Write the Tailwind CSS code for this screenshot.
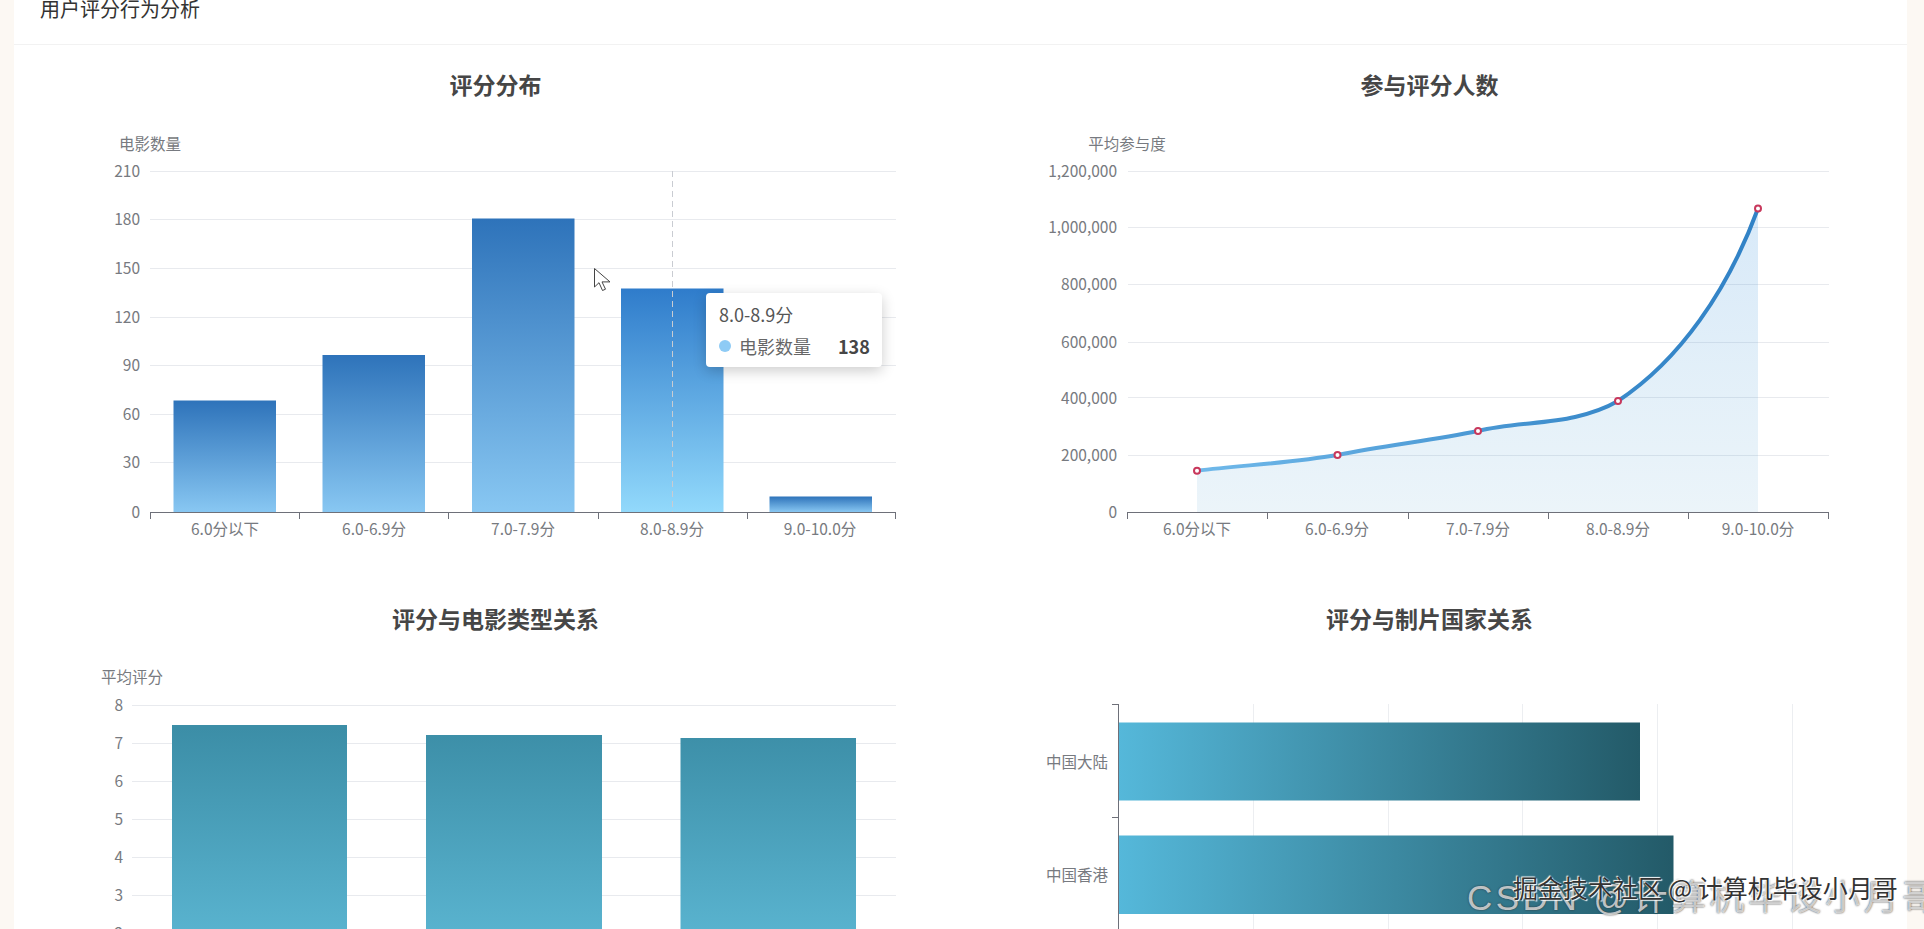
<!DOCTYPE html>
<html lang="zh-CN">
<head>
  <meta charset="UTF-8">
  <meta name="viewport" content="width=device-width, initial-scale=1.0">
  <title>用户评分行为分析</title>
  <script src="https://cdn.jsdelivr.net/npm/@tailwindcss/browser@4"></script>
</head>
<body class="font-['Noto_Sans_CJK_SC',sans-serif] text-[#464646]">
  <div class="relative h-[929px] overflow-hidden bg-[#fcf8f3] pl-[14px] pr-[17px]">
    <div class="-mt-5 bg-white">
      <div class="h-[65px] border-b border-[#f2f2f2] pl-[26px] pt-[15px] text-[20px] leading-7 text-[#333]">用户评分行为分析</div>

      <div class="grid grid-cols-[912px_912px] gap-x-6 gap-y-5 pl-6 pt-[23px]">

        <!-- 评分分布 -->
        <div class="relative">
          <h3 class="mb-[2px] pl-[3px] text-center text-[23px] font-bold leading-8">评分分布</h3>
          <svg class="block text-[15.5px]" width="912" height="480" viewBox="38 103 912 480">
            <defs>
              <linearGradient id="blue" x1="0" y1="0" x2="0" y2="1">
                <stop offset="0" stop-color="#2e73ba"/>
                <stop offset="1" stop-color="#88c7f2"/>
              </linearGradient>
              <linearGradient id="blueHover" x1="0" y1="0" x2="0" y2="1">
                <stop offset="0" stop-color="#2f7ccb"/>
                <stop offset="1" stop-color="#92d9fb"/>
              </linearGradient>
            </defs>
            <path d="M150 172.5H896M150 220.5H896M150 269.5H896M150 318.5H896M150 366.5H896M150 415.5H896M150 463.5H896" stroke="#e8eaee"/>
            <g fill="url(#blue)">
              <rect x="173.5" y="401.500" width="102.5" height="111.500"/>
              <rect x="322.5" y="356" width="102.5" height="157"/>
              <rect x="472" y="219.500" width="102.5" height="293.500"/>
              <rect x="621" y="289.500" width="102.5" height="223.500" fill="url(#blueHover)"/>
              <rect x="769.5" y="497.5" width="102.5" height="15.5"/>
            </g>
            <path d="M672.5 172V513" stroke="#c9ccd2" stroke-dasharray="6 4"/>
            <path d="M150 513.5H896M150.5 513V520M299.5 513V520M448.5 513V520M598.5 513V520M747.5 513V520M895.5 513V520" stroke="#6e7079" fill="none"/>
            <g fill="#777a80" text-anchor="end" dominant-baseline="central">
              <text x="140" y="171">210</text>
              <text x="140" y="219">180</text>
              <text x="140" y="268">150</text>
              <text x="140" y="316.5">120</text>
              <text x="140" y="365">90</text>
              <text x="140" y="414">60</text>
              <text x="140" y="462">30</text>
              <text x="140" y="511.5">0</text>
            </g>
            <g fill="#777a80" text-anchor="middle" dominant-baseline="central">
              <text x="150" y="143.5">电影数量</text>
              <text x="225" y="529">6.0分以下</text>
              <text x="374" y="529">6.0-6.9分</text>
              <text x="523" y="529">7.0-7.9分</text>
              <text x="672" y="529">8.0-8.9分</text>
              <text x="820" y="529">9.0-10.0分</text>
            </g>
          </svg>

          <!-- tooltip -->
          <div class="absolute left-[668px] top-[225px] h-[74px] w-[176px] rounded bg-white pl-[13px] pt-2 text-[18px] leading-[26px] text-[#555] shadow-[0_4px_14px_rgba(0,0,0,0.2)]">
            <div>8.0-8.9分</div>
            <div class="mt-[6px] flex items-center">
              <span class="h-3 w-3 rounded-full bg-[#8ecbf5]"></span>
              <span class="ml-2 text-[#666]">电影数量</span>
              <span class="ml-[27px] font-bold text-[#464646]">138</span>
            </div>
          </div>

          <!-- mouse pointer -->
          <svg class="absolute left-[556px] top-[200px]" width="18" height="25" viewBox="0 0 18 25">
            <path d="M.5.5V19L5 14.7 8.5 22.5 11.5 21.2 8 13.9H16Z" fill="#fff" stroke="#444"/>
          </svg>
        </div>

        <!-- 参与评分人数 -->
        <div>
          <h3 class="mb-[2px] pr-[1px] text-center text-[23px] font-bold leading-8">参与评分人数</h3>
          <svg class="block text-[15.5px]" width="912" height="480" viewBox="974 103 912 480">
            <defs>
              <linearGradient id="area" x1="0" y1="0" x2="0" y2="1">
                <stop offset="0" stop-color="#3b93e0" stop-opacity="0.2"/>
                <stop offset="1" stop-color="#3b93c8" stop-opacity="0.1"/>
              </linearGradient>
              <linearGradient id="lineColor" gradientUnits="userSpaceOnUse" x1="1197" y1="0" x2="1758" y2="0">
                <stop offset="0" stop-color="#70b9ea"/>
                <stop offset="0.7" stop-color="#3b8bcb"/>
                <stop offset="1" stop-color="#3182c6"/>
              </linearGradient>
            </defs>
            <path d="M1128 172.5H1829M1128 228.5H1829M1128 285.5H1829M1128 343.5H1829M1128 398.5H1829M1128 456.5H1829" stroke="#e8eaee"/>
            <g transform="translate(0 1)">
              <path d="M1197 470.7C1245 465 1290 463 1337.5 455C1385 445 1430 441 1478 431C1510 423 1545 424 1575 417C1592 413 1606 408 1618 401C1680 360 1728 290 1758 208.5V512H1197Z" fill="url(#area)"/>
              <path d="M1197 470.7C1245 465 1290 463 1337.5 455C1385 445 1430 441 1478 431C1510 423 1545 424 1575 417C1592 413 1606 408 1618 401C1680 360 1728 290 1758 208.5" fill="none" stroke="url(#lineColor)" stroke-width="4"/>
              <g fill="#fff" stroke="#c8385c" stroke-width="2">
                <circle cx="1197" cy="470.7" r="3"/>
                <circle cx="1337.5" cy="455" r="3"/>
                <circle cx="1478" cy="431" r="3"/>
                <circle cx="1618" cy="401" r="3"/>
                <circle cx="1758" cy="208.5" r="3"/>
              </g>
            </g>
            <path d="M1127.5 513.5H1829M1127.5 513V520M1267.5 513V520M1408.5 513V520M1548.5 513V520M1688.5 513V520M1828.5 513V520" stroke="#6e7079" fill="none"/>
            <g fill="#777a80" text-anchor="end" dominant-baseline="central">
              <text x="1117" y="171">1,200,000</text>
              <text x="1117" y="227">1,000,000</text>
              <text x="1117" y="284">800,000</text>
              <text x="1117" y="341.5">600,000</text>
              <text x="1117" y="397.5">400,000</text>
              <text x="1117" y="454.5">200,000</text>
              <text x="1117" y="511.5">0</text>
            </g>
            <g fill="#777a80" text-anchor="middle" dominant-baseline="central">
              <text x="1127" y="143.5">平均参与度</text>
              <text x="1197" y="529">6.0分以下</text>
              <text x="1337" y="529">6.0-6.9分</text>
              <text x="1478" y="529">7.0-7.9分</text>
              <text x="1618" y="529">8.0-8.9分</text>
              <text x="1758" y="529">9.0-10.0分</text>
            </g>
          </svg>
        </div>

        <!-- 评分与电影类型关系 -->
        <div>
          <h3 class="mb-[2px] pl-[3px] text-center text-[23px] font-bold leading-8">评分与电影类型关系</h3>
          <svg class="block text-[15.5px]" width="912" height="480" viewBox="38 637 912 480">
            <defs>
              <linearGradient id="tealBar" gradientUnits="userSpaceOnUse" x1="0" y1="730" x2="0" y2="940">
                <stop offset="0" stop-color="#3c8ea7"/>
                <stop offset="1" stop-color="#5ab4d0"/>
              </linearGradient>
            </defs>
            <path d="M132 706.5H896M132 744.5H896M132 782.5H896M132 820.5H896M132 858.5H896M132 896.5H896M132 934.5H896" stroke="#e8eaee"/>
            <g fill="url(#tealBar)">
              <rect x="172" y="726" width="175" height="300"/>
              <rect x="426" y="736" width="176" height="300"/>
              <rect x="680.5" y="739" width="175.5" height="300"/>
            </g>
            <g fill="#777a80" text-anchor="end" dominant-baseline="central">
              <text x="123" y="704.5">8</text>
              <text x="123" y="742.5">7</text>
              <text x="123" y="780.5">6</text>
              <text x="123" y="819">5</text>
              <text x="123" y="857">4</text>
              <text x="123" y="895">3</text>
              <text x="123" y="933">2</text>
            </g>
            <text x="132" y="677" fill="#777a80" text-anchor="middle" dominant-baseline="central">平均评分</text>
          </svg>
        </div>

        <!-- 评分与制片国家关系 -->
        <div>
          <h3 class="mb-[2px] pr-[1px] text-center text-[23px] font-bold leading-8">评分与制片国家关系</h3>
          <svg class="block text-[15.5px]" width="912" height="480" viewBox="974 637 912 480">
            <defs>
              <linearGradient id="tealH" x1="0" y1="0" x2="1" y2="0">
                <stop offset="0" stop-color="#55b8da"/>
                <stop offset="1" stop-color="#235a68"/>
              </linearGradient>
            </defs>
            <path d="M1253.5 705V1000M1388.5 705V1000M1522.5 705V1000M1657.5 705V1000M1792.5 705V1000" stroke="#eceef1"/>
            <rect x="1118" y="723.5" width="522" height="78" fill="url(#tealH)"/>
            <rect x="1118" y="836.5" width="555.5" height="78.5" fill="url(#tealH)"/>
            <path d="M1118.5 705V1000M1112 705.5H1118M1112 818.5H1118M1112 932.5H1118" stroke="#6e7079" fill="none"/>
            <g fill="#777a80" text-anchor="end" dominant-baseline="central">
              <text x="1108" y="761.5">中国大陆</text>
              <text x="1108" y="875">中国香港</text>
            </g>
          </svg>
        </div>
      </div>
    </div>

    <!-- video watermarks -->
    <div class="absolute left-[1467px] top-[876px] whitespace-nowrap font-['Liberation_Sans','Noto_Sans_CJK_SC',sans-serif] text-[35px] leading-[44px] tracking-[3.5px] text-white/70 [text-shadow:0_0_2px_rgba(50,50,50,1)]">CSDN @计算机毕设小月哥</div>
    <div class="absolute left-[1513px] top-[868px] whitespace-nowrap text-[25px] leading-[38px] text-[#333] [text-shadow:1px_1px_1px_#fff,-1px_-1px_1px_#fff]">掘金技术社区 @ 计算机毕设小月哥</div>
  </div>
</body>
</html>
